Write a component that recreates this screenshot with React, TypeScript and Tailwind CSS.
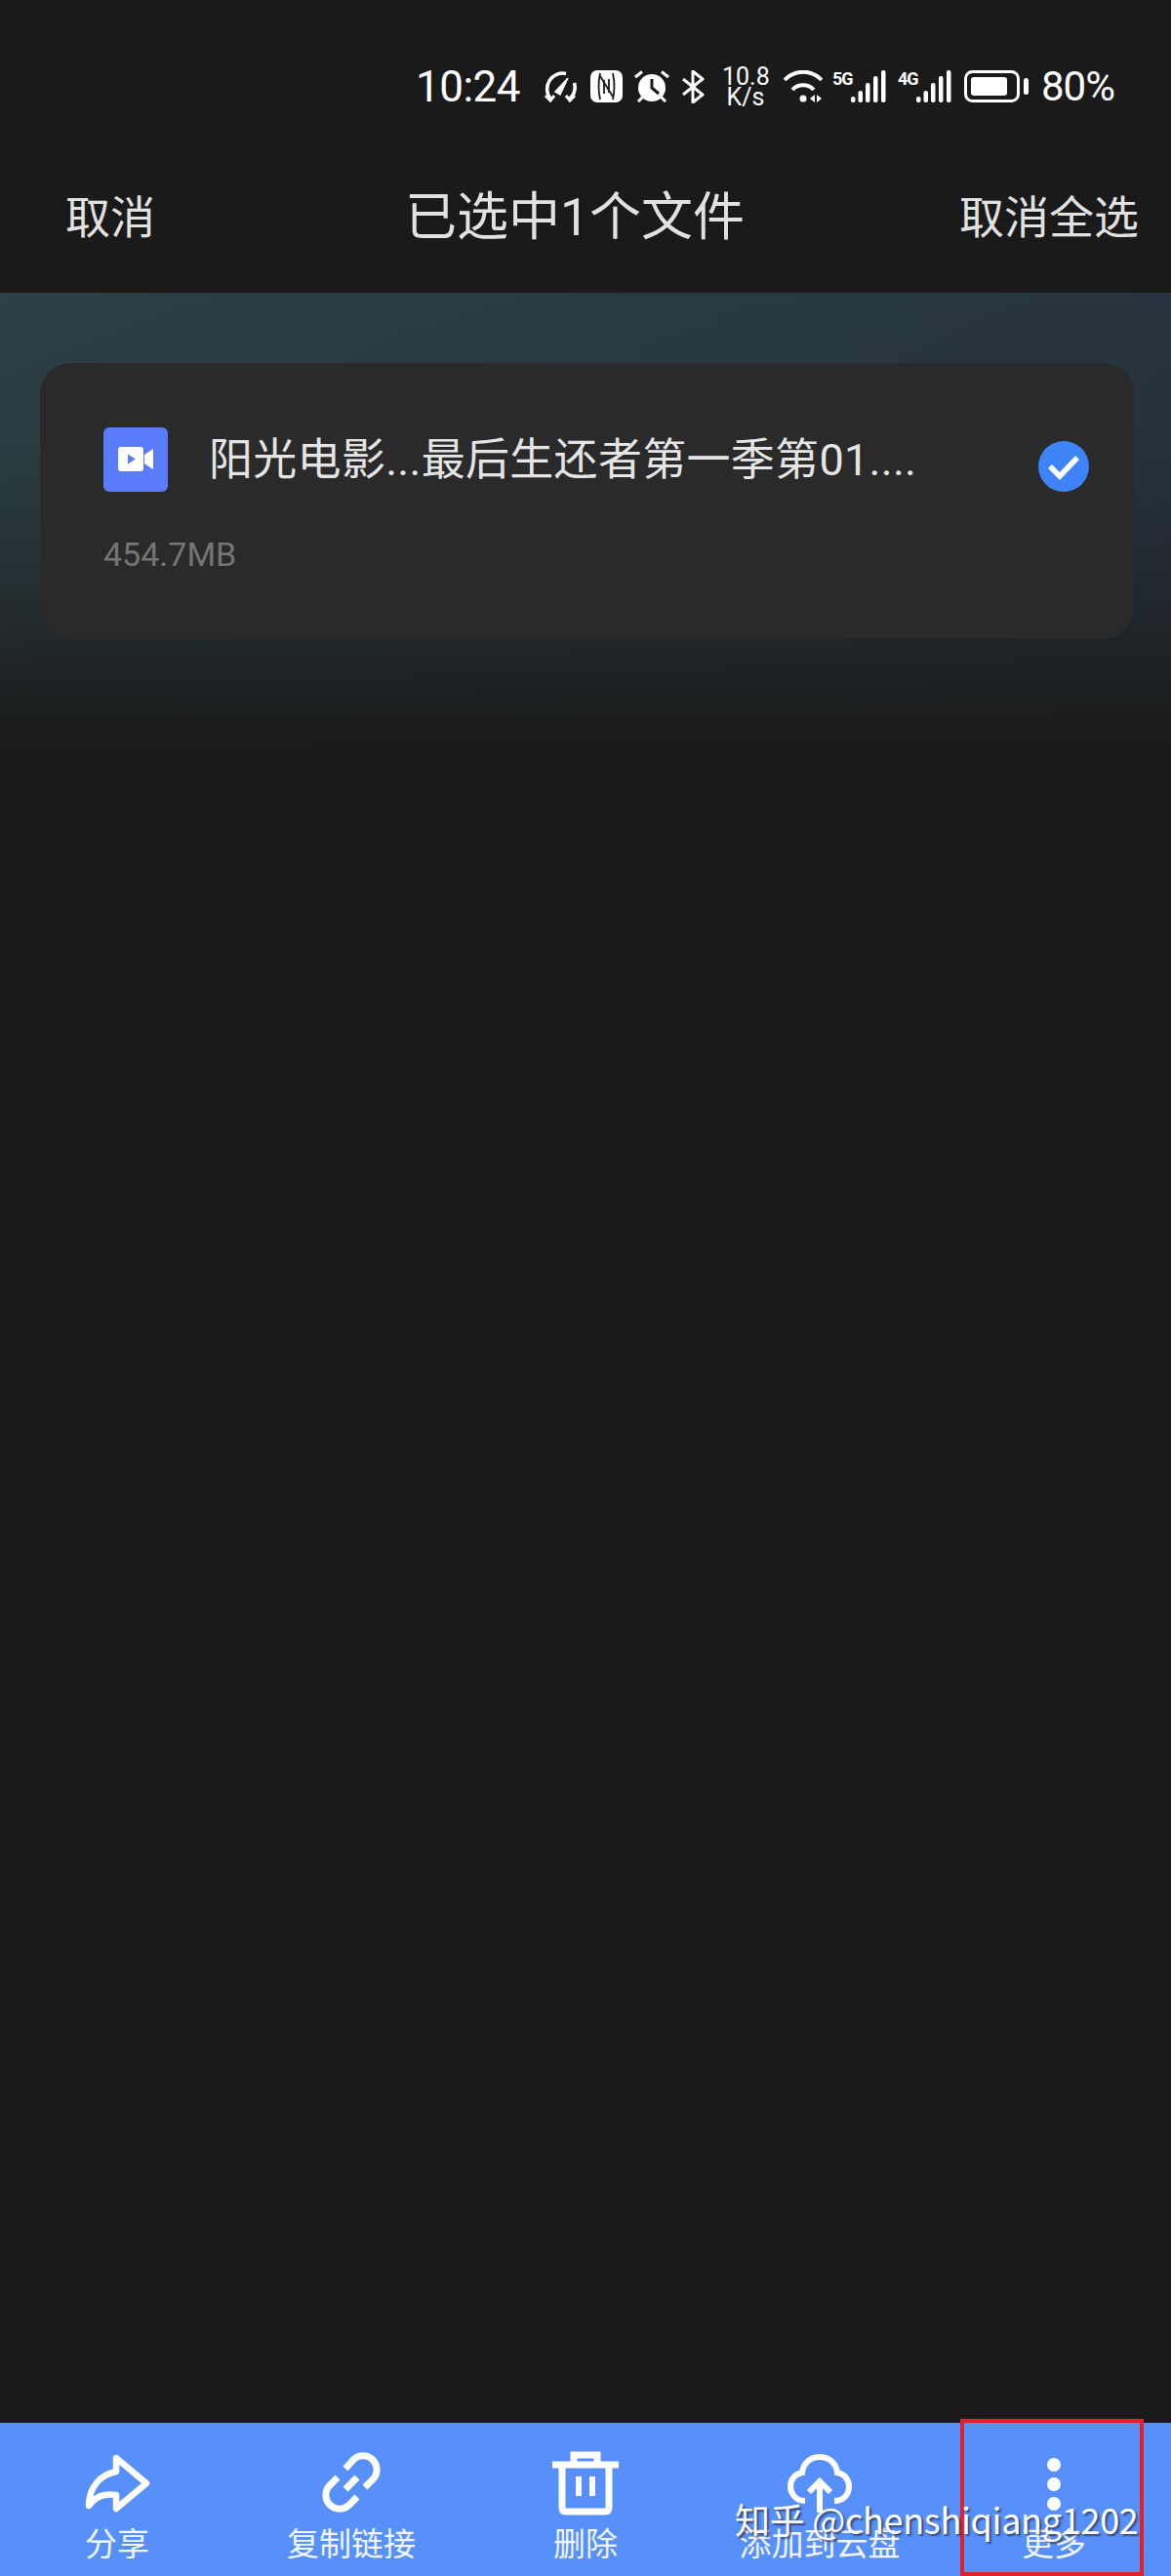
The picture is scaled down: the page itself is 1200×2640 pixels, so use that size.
import React from 'react';

const tabs = [
  { label: '分享', icon: <ShareIcon /> },
  { label: '复制链接', icon: <LinkIcon /> },
  { label: '删除', icon: <TrashIcon /> },
  { label: '添加到云盘', icon: <CloudIcon /> },
  { label: '更多', icon: <DotsIcon /> },
];

function ShareIcon() {
  return (
    <svg width="67" height="60" viewBox="0 0 67 60" fill="none" stroke="white" strokeWidth="6.5" strokeLinejoin="round">
      <path d="M32 4 L63 30 L32 56 V42 C20 40 10 44 4 53 C4 34 16 21 32 18 Z" />
    </svg>
  );
}

function LinkIcon() {
  return (
    <svg width="64" height="64" viewBox="0 0 64 64" fill="none" stroke="white" strokeWidth="7">
      <path d="M26 17 L34 8 A14 14 0 0 1 54 28 L46 36" />
      <path d="M18 26 L10 34 A14 14 0 0 0 30 54 L38 46" />
      <path d="M26 38 L38 26" />
    </svg>
  );
}

function TrashIcon() {
  return (
    <svg width="68" height="66" viewBox="0 0 68 66" fill="none" stroke="white" strokeWidth="7">
      <path d="M0 14 H68" />
      <path d="M22 14 V4 H46 V14" />
      <path d="M10 14 V58 Q10 62 14 62 H54 Q58 62 58 58 V14" />
      <path d="M27 26 V46 M41 26 V46" strokeWidth="6" />
    </svg>
  );
}

function CloudIcon() {
  return (
    <svg width="66" height="60" viewBox="0 0 66 60" fill="none" stroke="white" strokeWidth="6">
      <path d="M18 48 C8 48 3 40 3 33 C3 25 9 20 15 19 C16 9 24 3 33 3 C42 3 50 9 51 19 C58 20 63 26 63 33 C63 41 58 48 48 48" />
      <path d="M33 60 V28 M22 39 L33 28 L44 39" />
    </svg>
  );
}

function DotsIcon() {
  return (
    <svg width="16" height="66" viewBox="0 0 16 66" fill="white">
      <circle cx="8" cy="14" r="7" />
      <circle cx="8" cy="34" r="7" />
      <circle cx="8" cy="54" r="7" />
    </svg>
  );
}

function Signal() {
  return (
    <svg width="36" height="33" viewBox="0 0 36 33" fill="white" className="shrink-0">
      <rect x="0" y="27" width="4.5" height="6" rx="2" />
      <rect x="7.5" y="21" width="4.5" height="12" rx="2" />
      <rect x="15" y="13" width="4.5" height="20" rx="2" />
      <rect x="23" y="6" width="4.5" height="27" rx="2" />
      <rect x="31" y="0" width="4.5" height="33" rx="2" />
    </svg>
  );
}

function StatusBar() {
  return (
    <div className="h-[140px] pt-[37px] pl-[426px] flex items-center text-white shrink-0">
      <span className="w-[107px] shrink-0 text-[44px] font-normal tracking-[-0.5px] leading-none whitespace-nowrap">10:24</span>
      {/* speedometer */}
      <svg width="38" height="33" viewBox="0 0 38 33" fill="none" stroke="white" strokeWidth="3.5" className="ml-[22px] shrink-0">
        <path d="M9 29 A16 16 0 0 1 25 3.5" />
        <path d="M33.5 13 A16 16 0 0 1 29 29" />
        <path d="M4 26 L9 31 L13 26 M25 26 L29 31 L34 26" strokeWidth="3" />
        <path d="M14 22 L27 8 L19 25 Z" fill="white" strokeWidth="1.5" />
      </svg>
      {/* nfc */}
      <svg width="33" height="33" viewBox="0 0 33 33" className="ml-[12px] shrink-0">
        <rect width="33" height="33" rx="7" fill="white" />
        <path d="M10 3 C8 12 8 21 10 30 M23 3 C25 12 25 21 23 30 M10 6 L23 27 M14 10 V24 M19 9 V23" fill="none" stroke="#1a1a1a" strokeWidth="1.8" />
      </svg>
      {/* alarm */}
      <svg width="36" height="33" viewBox="0 0 36 33" className="ml-[12px] shrink-0">
        <circle cx="18" cy="18" r="14" fill="white" />
        <path d="M18 9 V18 L25 24" fill="none" stroke="#1a1a1a" strokeWidth="3" />
        <path d="M1 7 L8 1.5 M35 7 L28 1.5 M4 32 L9 27 M32 32 L27 27" fill="none" stroke="white" strokeWidth="3" />
      </svg>
      {/* bluetooth */}
      <svg width="24" height="34" viewBox="0 0 24 34" fill="none" stroke="white" strokeWidth="3" className="ml-[12px] shrink-0">
        <path d="M2 9 L22 25 L12 33 V1 L22 9 L2 25" strokeLinejoin="round" />
      </svg>
      <div className="ml-[18px] w-[48px] shrink-0 text-center text-[25px] leading-[21px] font-normal">
        <div>10.8</div>
        <div>K/s</div>
      </div>
      {/* wifi */}
      <svg width="40" height="33" viewBox="0 0 40 33" fill="none" stroke="white" strokeWidth="4" className="ml-[15px] shrink-0">
        <path d="M1 10 A26 26 0 0 1 39 10" />
        <path d="M9 20 A15 15 0 0 1 31 20" />
        <circle cx="20" cy="29" r="3.5" fill="white" stroke="none" />
        <path d="M32 25 L27 29 L32 33 Z M34 25 L39 29 L34 33 Z" fill="white" stroke="none" />
      </svg>
      <span className="ml-[10px] w-[19px] shrink-0 self-start mt-[35px] text-[18px] font-bold leading-[18px] tracking-[-1px]">5G</span>
      <Signal />
      <span className="ml-[12px] w-[19px] shrink-0 self-start mt-[35px] text-[18px] font-bold leading-[18px] tracking-[-1px]">4G</span>
      <Signal />
      {/* battery */}
      <svg width="66" height="33" viewBox="0 0 66 33" fill="none" className="ml-[13px] shrink-0">
        <rect x="1.5" y="1.5" width="54" height="30" rx="7" stroke="white" strokeWidth="3" />
        <rect x="7" y="7" width="37" height="19" rx="3" fill="white" />
        <rect x="61" y="8" width="5" height="17" rx="2.5" fill="white" />
      </svg>
      <span className="ml-[13px] shrink-0 text-[42px] font-normal leading-none tracking-[-1px]">80%</span>
    </div>
  );
}

export default function App() {
  return (
    <div className="h-[2640px] flex flex-col bg-[#1a1a1a] font-[Roboto,'Noto_Sans_CJK_SC',sans-serif]">
      <StatusBar />

      <header className="h-[160px] shrink-0 flex items-center pt-[6px] pl-[67px] pr-[33px] text-[#e2e2e2]">
        <span className="text-[46px] leading-none">取消</span>
        <span className="flex-1 pl-[36px] text-center text-[53px] leading-none font-normal">已选中1个文件</span>
        <span className="text-[46px] leading-none">取消全选</span>
      </header>

      <main className="flex-1 pt-[72px] pl-[41px] pr-[38px] bg-[linear-gradient(180deg,rgba(26,26,26,0)_0px,rgba(26,26,26,0.1)_150px,rgba(26,26,26,0.3)_250px,rgba(26,26,26,0.6)_350px,rgba(26,26,26,0.85)_420px,#1a1a1a_475px),linear-gradient(90deg,#2c4046,#27343f)]">
        <div className="h-[283px] rounded-[32px] bg-[#2a2a2a] pt-[66px] pl-[65px] pr-[46px]">
          <div className="flex items-center">
            <div className="w-[66px] h-[66px] rounded-md bg-[#5b7cfa] flex items-center justify-center">
              <svg width="36" height="26" viewBox="0 0 36 26" fill="white">
                <rect width="26" height="25" rx="3" />
                <path d="M27 8 L36 2 V23 L27 17 Z" />
                <path d="M10 7.5 L18 12.5 L10 17.5 Z" fill="#5b7cfa" />
              </svg>
            </div>
            <span className="ml-[42px] flex-1 text-[45px] tracking-[0.3px] leading-none text-[#e5e5e5]">阳光电影...最后生还者第一季第01....</span>
            <div className="mt-[14px] w-[52px] h-[52px] rounded-full bg-[#3f83f8] flex items-center justify-center">
              <svg width="34" height="27" viewBox="0 0 34 27" fill="none" stroke="white" strokeWidth="5.5">
                <path d="M3 13 L13 23 L31 4" />
              </svg>
            </div>
          </div>
          <div className="mt-[46px] text-[34px] leading-[36px] text-[#757575]">454.7MB</div>
        </div>
      </main>

      <nav className="relative h-[157px] shrink-0 grid grid-cols-5 bg-[#5790fb]">
        {tabs.map((tab) => (
          <div key={tab.label} className="pt-[29px] flex flex-col items-center">
            <div className="h-[66px] flex items-center justify-center">{tab.icon}</div>
            <span className="mt-[10px] text-[33px] leading-[40px] text-[#f2f6ff]">{tab.label}</span>
          </div>
        ))}
        <div className="absolute right-[28px] top-[-4px] w-[188px] h-[161px] border-[4px] border-[#e0202e]" />
        <span className="absolute left-[753px] top-[76px] text-[36px] tracking-[-0.3px] leading-[44px] whitespace-nowrap text-white font-['Noto_Sans_CJK_SC',sans-serif] [text-shadow:2px_2px_2px_rgba(40,40,60,0.7)]">
          知乎 @chenshiqiang1202
        </span>
      </nav>
    </div>
  );
}
